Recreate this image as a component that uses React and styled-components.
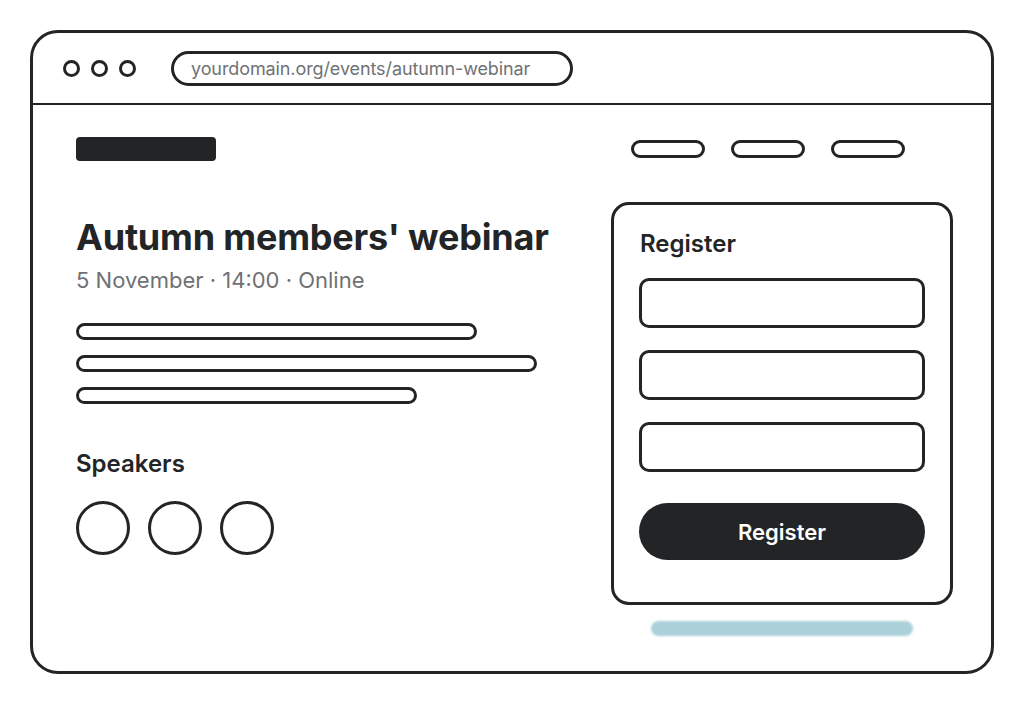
import React from "react";
import styled, { createGlobalStyle } from "styled-components";

const ink = "#222426";

const Global = createGlobalStyle`
  html, body { margin: 0; padding: 0; background: #ffffff; }
  body { font-family: Inter, "Noto Sans", "Liberation Sans", sans-serif; color: ${ink}; }
  * { box-sizing: border-box; }
`;

const Frame = styled.div`
  margin: 30px 0 0 30px;
  width: 964px;
  height: 644px;
  border: 3px solid ${ink};
  border-radius: 28px;
  overflow: hidden;
  display: flex;
  flex-direction: column;
  background: #fff;
`;

const Chrome = styled.div`
  height: 72px;
  flex: none;
  border-bottom: 2.5px solid ${ink};
  display: flex;
  align-items: center;
  padding: 0 0 0 30px;
`;

const Dots = styled.div`
  display: flex;
  gap: 11px;
`;

const Dot = styled.span`
  width: 17px;
  height: 17px;
  border-radius: 50%;
  border: 3px solid ${ink};
`;

const Url = styled.div`
  margin-left: 35px;
  width: 402px;
  height: 35px;
  border: 3px solid ${ink};
  border-radius: 18px;
  display: flex;
  align-items: center;
  padding-left: 17px;
  font-size: 18px;
  color: #707274;
  letter-spacing: -0.1px;
`;

const Content = styled.div`
  flex: 1;
  padding: 32px 38px 0 43px;
  display: flex;
  flex-direction: column;
`;

const TopBar = styled.div`
  display: flex;
  align-items: center;
  justify-content: space-between;
  padding-right: 48px;
`;

const Logo = styled.div`
  width: 140px;
  height: 24px;
  border-radius: 4px;
  background: ${ink};
`;

const Nav = styled.div`
  display: flex;
  gap: 26px;
`;

const NavPill = styled.span`
  width: 74px;
  height: 18px;
  border-radius: 9px;
  border: 3px solid ${ink};
`;

const Body = styled.div`
  display: flex;
  justify-content: space-between;
  align-items: flex-start;
  margin-top: 41px;
`;

const Left = styled.div`
  display: flex;
  flex-direction: column;
  padding-top: 13px;
`;

const Title = styled.h1`
  margin: 0;
  font-size: 36px;
  line-height: 44px;
  font-weight: 700;
  letter-spacing: -0.2px;
`;

const Meta = styled.div`
  margin-top: 7px;
  font-size: 22px;
  line-height: 28px;
  color: #6f7173;
`;

const Lines = styled.div`
  margin-top: 29px;
  display: flex;
  flex-direction: column;
  gap: 15px;
`;

const Line = styled.span`
  display: block;
  width: ${(p) => p.$w}px;
  height: 17px;
  border-radius: 9px;
  border: 3px solid ${ink};
`;

const SectionTitle = styled.h2`
  margin: 46px 0 0;
  font-size: 24px;
  line-height: 28px;
  font-weight: 600;
`;

const Avatars = styled.div`
  margin-top: 23px;
  display: flex;
  gap: 18px;
`;

const Avatar = styled.span`
  width: 54px;
  height: 54px;
  border-radius: 50%;
  border: 3px solid ${ink};
`;

const Right = styled.div`
  display: flex;
  flex-direction: column;
  align-items: center;
`;

const Card = styled.div`
  width: 342px;
  height: 403px;
  border: 3px solid ${ink};
  border-radius: 18px;
  padding: 25px 25px 0 25px;
  display: flex;
  flex-direction: column;
`;

const CardTitle = styled.h3`
  margin: 0 0 0 1px;
  font-size: 24px;
  line-height: 28px;
  font-weight: 600;
`;

const Fields = styled.div`
  margin-top: 20px;
  display: flex;
  flex-direction: column;
  gap: 22px;
`;

const Field = styled.div`
  height: 50px;
  border: 3px solid ${ink};
  border-radius: 10px;
`;

const Button = styled.div`
  margin-top: 31px;
  height: 57px;
  border-radius: 29px;
  background: ${ink};
  color: #fff;
  display: flex;
  align-items: center;
  justify-content: center;
  font-size: 22px;
  font-weight: 600;
`;

const Glow = styled.div`
  margin-top: 16px;
  width: 262px;
  height: 15px;
  border-radius: 8px;
  background: #abd0da;
  filter: blur(0.8px);
`;

export default function App() {
  return (
    <>
      <Global />
      <Frame>
        <Chrome>
          <Dots>
            <Dot />
            <Dot />
            <Dot />
          </Dots>
          <Url>yourdomain.org/events/autumn-webinar</Url>
        </Chrome>
        <Content>
          <TopBar>
            <Logo />
            <Nav>
              <NavPill />
              <NavPill />
              <NavPill />
            </Nav>
          </TopBar>
          <Body>
            <Left>
              <Title>Autumn members' webinar</Title>
              <Meta>5 November · 14:00 · Online</Meta>
              <Lines>
                <Line $w={401} />
                <Line $w={461} />
                <Line $w={341} />
              </Lines>
              <SectionTitle>Speakers</SectionTitle>
              <Avatars>
                <Avatar />
                <Avatar />
                <Avatar />
              </Avatars>
            </Left>
            <Right>
              <Card>
                <CardTitle>Register</CardTitle>
                <Fields>
                  <Field />
                  <Field />
                  <Field />
                </Fields>
                <Button>Register</Button>
              </Card>
              <Glow />
            </Right>
          </Body>
        </Content>
      </Frame>
    </>
  );
}
